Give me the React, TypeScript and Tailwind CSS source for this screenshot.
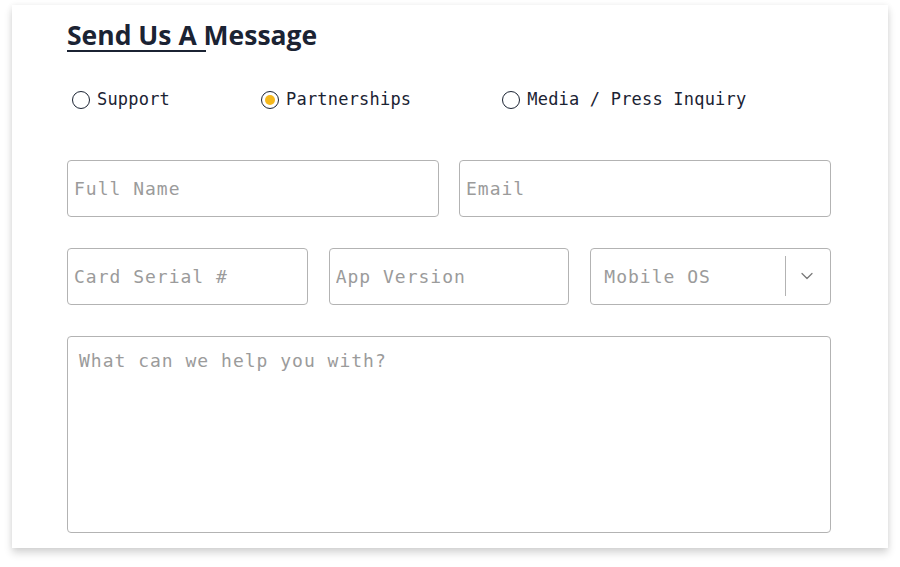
import { ChevronDown } from 'lucide-react'

const mono = { fontFamily: '"DejaVu Sans Mono", "Liberation Mono", monospace' }

function Radio({ label, checked }: { label: string; checked?: boolean }) {
  return (
    <label className="flex items-center gap-[7px] cursor-pointer">
      <span className="flex h-[18px] w-[18px] items-center justify-center rounded-full border-[1.5px] border-[#1b2333] bg-white">
        {checked && <span className="h-[10px] w-[10px] rounded-full bg-[#f5b81c]" />}
      </span>
      <span className="text-[17px] tracking-[0.2px] text-[#1b2333]">{label}</span>
    </label>
  )
}

function Field({ placeholder }: { placeholder: string }) {
  return (
    <input
      placeholder={placeholder}
      className="h-[57px] w-full rounded-[4px] border border-[#b3b3b3] bg-white px-[6px] text-[18px] tracking-[1px] text-[#333] outline-none placeholder:text-[#9b9b9b]"
      style={mono}
    />
  )
}

export default function App() {
  return (
    <div className="min-h-[567px] bg-white pt-[5px]">
      <div
        className="mx-[12px] h-[543px] bg-white pl-[55px] pr-[57px] pt-[12px] shadow-[0_5px_8px_rgba(0,0,0,0.16),0_0_6px_rgba(0,0,0,0.06)]"
        style={mono}
      >
        <h2
          className="relative inline-block text-[26.5px] font-bold leading-[36px] text-[#1b2333]"
          style={{ fontFamily: '"Open Sans", "Liberation Sans", sans-serif' }}
        >
          Send Us A Message
          <span className="absolute left-0 top-[33px] h-[2px] w-[139px] bg-[#1b2333]" />
        </h2>

        <div className="mt-[34px] flex items-center gap-[91px] pl-[5px]">
          <Radio label="Support" />
          <Radio label="Partnerships" checked />
          <Radio label="Media / Press Inquiry" />
        </div>

        <div className="mt-[47px] grid grid-cols-2 gap-[20px]">
          <Field placeholder="Full Name" />
          <Field placeholder="Email" />
        </div>

        <div className="mt-[31px] grid grid-cols-3 gap-[21px]">
          <Field placeholder="Card Serial #" />
          <Field placeholder="App Version" />
          <div className="flex h-[57px] items-center rounded-[4px] border border-[#b3b3b3] bg-white">
            <span className="flex-1 pl-[13px] text-[18px] tracking-[1px] text-[#9b9b9b]">Mobile OS</span>
            <span className="h-[40px] w-px bg-[#b3b3b3]" />
            <span className="flex w-[44px] items-center justify-center pr-[2px] text-[#7a7a7a]">
              <ChevronDown size={20} strokeWidth={1.5} />
            </span>
          </div>
        </div>

        <textarea
          placeholder="What can we help you with?"
          className="mt-[31px] block h-[197px] w-full resize-none rounded-[4px] border border-[#b3b3b3] bg-white px-[11px] py-[10px] text-[18px] tracking-[1px] text-[#333] outline-none placeholder:text-[#9b9b9b]"
          style={mono}
        />
      </div>
    </div>
  )
}
